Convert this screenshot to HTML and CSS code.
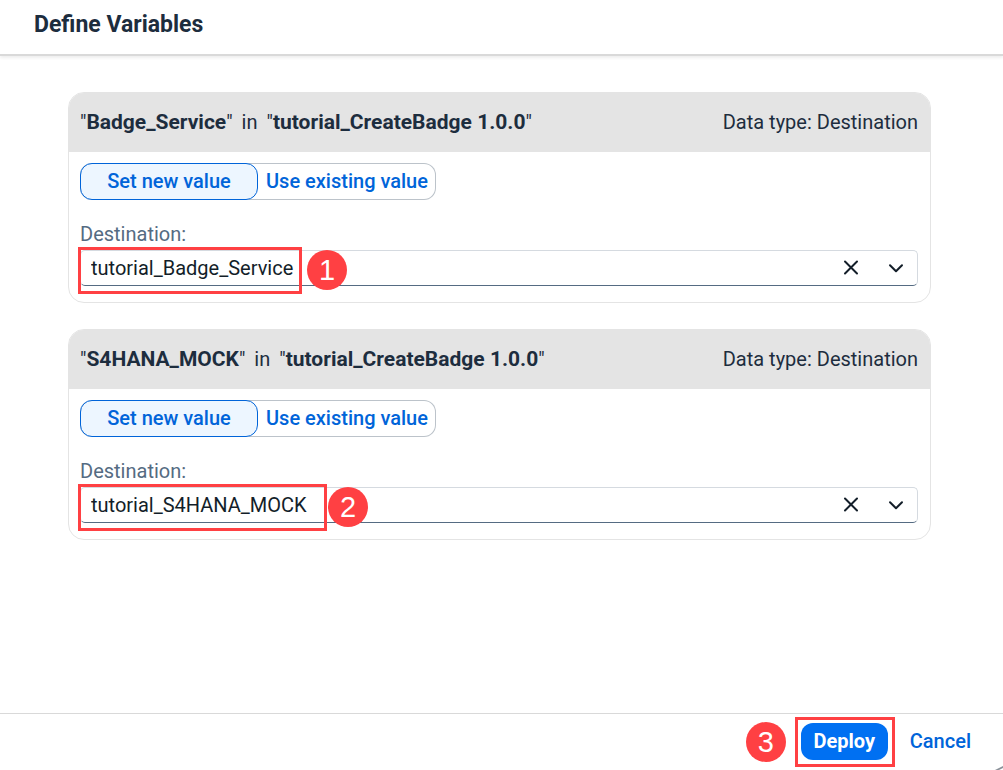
FILE: index.html
```html
<!DOCTYPE html>
<html lang="en">
<head>
<meta charset="utf-8">
<title>Define Variables</title>
<link rel="stylesheet" href="styles.css">
</head>
<body>
<div class="dialog">
  <header class="dialog-header"><h1 class="title">Define Variables</h1></header>
  <main class="content">
    <section class="card">
      <div class="card-header">
        <h2 class="card-title"><span>"<b>Badge_Service</b>"</span><span>in</span><span>"<b>tutorial_CreateBadge 1.0.0</b>"</span></h2>
        <span>Data type: Destination</span>
      </div>
      <div class="card-body">
        <div class="segmented">
          <button class="segment selected" type="button" aria-pressed="true">Set new value</button>
          <button class="segment" type="button" aria-pressed="false">Use existing value</button>
        </div>
        <label class="label" for="dest-badge">Destination:</label>
        <div class="field">
          <input class="input" id="dest-badge" type="text" value="tutorial_Badge_Service">
          <button class="icon-button" type="button" aria-label="Clear"><svg class="icon" viewBox="0 0 16 16"><path d="M2 1.5 14 13.5M14 1.5 2 13.5"/></svg></button>
          <button class="icon-button" type="button" aria-label="Open list"><svg class="icon" viewBox="0 0 16 16"><path d="M2 5.3 8 11.3 14 5.3"/></svg></button>
          <div class="callout callout-service"><span class="frame"></span><span class="marker">1</span></div>
        </div>
      </div>
    </section>
    <section class="card">
      <div class="card-header">
        <h2 class="card-title"><span>"<b>S4HANA_MOCK</b>"</span><span>in</span><span>"<b>tutorial_CreateBadge 1.0.0</b>"</span></h2>
        <span>Data type: Destination</span>
      </div>
      <div class="card-body">
        <div class="segmented">
          <button class="segment selected" type="button" aria-pressed="true">Set new value</button>
          <button class="segment" type="button" aria-pressed="false">Use existing value</button>
        </div>
        <label class="label" for="dest-mock">Destination:</label>
        <div class="field">
          <input class="input" id="dest-mock" type="text" value="tutorial_S4HANA_MOCK">
          <button class="icon-button" type="button" aria-label="Clear"><svg class="icon" viewBox="0 0 16 16"><path d="M2 1.5 14 13.5M14 1.5 2 13.5"/></svg></button>
          <button class="icon-button" type="button" aria-label="Open list"><svg class="icon" viewBox="0 0 16 16"><path d="M2 5.3 8 11.3 14 5.3"/></svg></button>
          <div class="callout callout-mock"><span class="frame"></span><span class="marker">2</span></div>
        </div>
      </div>
    </section>
  </main>
  <footer class="footer">
    <span class="marker">3</span>
    <div class="deploy-frame"><button class="deploy" type="button">Deploy</button></div>
    <button class="cancel" type="button">Cancel</button>
    <svg class="resize" viewBox="0 0 8 4"><path d="M0 4 8 0V2L4 4Z"/></svg>
  </footer>
</div>
</body>
</html>
```
FILE: styles.css
```css
* { box-sizing: border-box; }
body {
  margin: 0;
  background: #fff;
  color: #1d2d3e;
  font: 20px/24px Roboto, "Liberation Sans", sans-serif;
}
button, input { font: inherit; margin: 0; padding: 0; border: 0; background: none; }
h1, h2 { margin: 0; }
b { font-size: 21px; font-weight: 700; }

.dialog { display: flex; flex-direction: column; min-height: 100vh; }
.dialog-header {
  padding: 13px 34px 17px;
  border-bottom: 2px solid #d9d9d9;
  box-shadow: 0 2px 3px #eeeeee;
}
.title { font-size: 23px; line-height: 24px; font-weight: 700; }

.content {
  flex: 1;
  display: flex;
  flex-direction: column;
  gap: 26px;
  padding: 36px 72px 36px 68px;
}
.card { border: 1px solid #e4e4e4; border-radius: 16px; }
.card-header {
  display: flex;
  justify-content: space-between;
  align-items: center;
  padding: 17px 12px 18px 11px;
  background: #e4e4e4;
  border-radius: 15px 15px 0 0;
}
.card-title { display: flex; gap: 9px; font-size: 20px; font-weight: 400; }
.card-body { display: flex; flex-direction: column; padding: 11px 12px 16px 11px; }

.segmented {
  display: flex;
  align-self: flex-start;
  height: 37px;
  border-radius: 12px;
  box-shadow: inset 0 0 0 1px #bcc3ca;
}
.segment { width: 178px; padding-bottom: 2px; border-radius: 12px; color: #0064d9; font-weight: 500; }
.selected { background: #edf6ff; border: 1px solid #0064d9; }

.label { margin-top: 22px; margin-bottom: 4px; color: #556b82; }
.field {
  position: relative;
  display: flex;
  align-items: center;
  height: 36px;
  border: 1px solid #d5dae0;
  border-bottom-color: #556b82;
  border-radius: 5px;
}
.input { flex: 1; min-width: 0; padding-left: 10px; color: #131e29; outline: 0; }
.icon-button { display: flex; align-items: center; justify-content: center; width: 46px; height: 34px; }
.icon-button:nth-of-type(2) { width: 43px; }
.icon { width: 16px; height: 16px; fill: none; stroke: #131e29; stroke-width: 2; stroke-linecap: round; stroke-linejoin: round; }

.callout { position: absolute; top: -4px; left: -3px; display: flex; pointer-events: none; }
.callout .marker { margin-top: 3px; }
.callout-service { gap: 5px; }
.callout-mock { gap: 1px; }
.frame { width: 224px; height: 47px; border: 3px solid #ff4043; }
.callout-mock .frame { width: 249px; }
.marker {
  display: flex;
  align-items: center;
  justify-content: center;
  width: 40px;
  height: 40px;
  border-radius: 50%;
  background: #ff4043;
  color: #fff;
  font: 29px/40px "Liberation Sans", Arial, sans-serif;
}

.footer {
  position: relative;
  display: flex;
  justify-content: flex-end;
  align-items: center;
  padding: 3px 32px 3px 16px;
  border-top: 1px solid #d9d9d9;
}
.deploy-frame { margin-left: 9px; padding: 3px 4px 4px 3px; border: 3px solid #ff4043; }
.deploy { display: block; width: 87px; height: 37px; padding-bottom: 2px; border-radius: 12px; background: #0070f2; color: #fff; font-weight: 700; }
.cancel { margin-left: 15px; padding-bottom: 2px; color: #0064d9; font-weight: 500; }
.resize { position: absolute; right: 0; bottom: 0; width: 8px; height: 4px; fill: #8b929a; }
```
